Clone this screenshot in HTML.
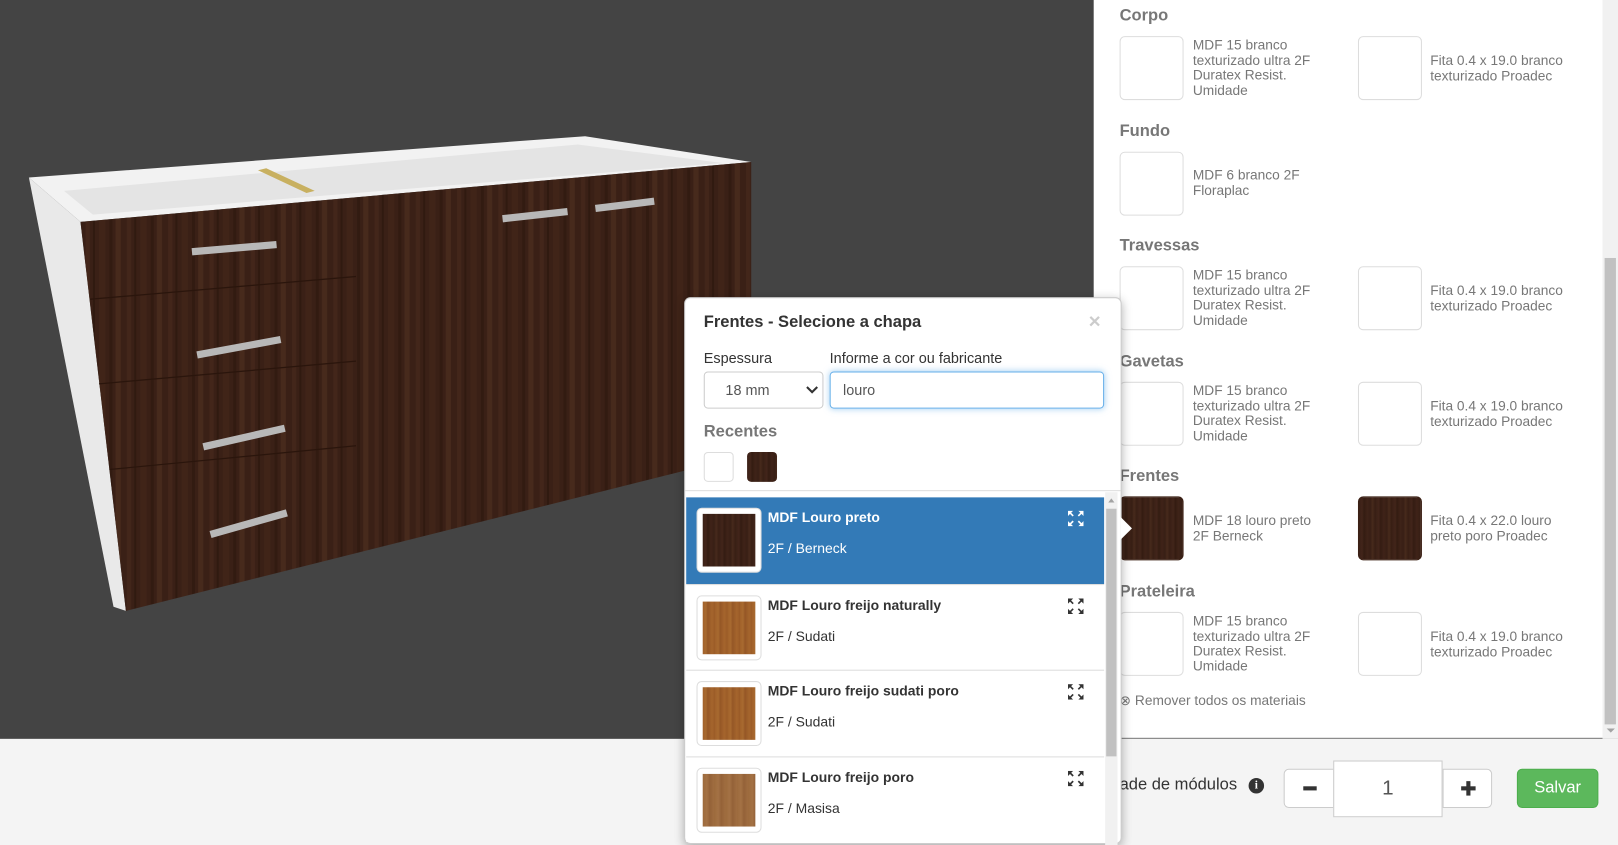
<!DOCTYPE html>
<html><head><meta charset="utf-8">
<style>
*{box-sizing:border-box;margin:0;padding:0}
html,body{width:1618px;height:824px;overflow:hidden;background:#f4f4f4;font-family:"Liberation Sans",Arial,sans-serif}
#s{position:absolute;left:0;top:0;width:1568px;height:798px;transform:scale(1.03189);transform-origin:0 0;background:#f4f4f4}
.abs{position:absolute}
#canvas{left:0;top:0;width:1060px;height:716px;background:#444}
#panel{left:1060px;top:0;width:508px;height:716px;background:#fff;border-bottom:1px solid #777}
#sb{left:1553px;top:0;width:15px;height:716px;background:#f1f1f1}
.h{position:absolute;left:25px;font-weight:bold;font-size:16px;color:#777}
.sw{position:absolute;width:62px;height:62px;border:1px solid #ddd;border-radius:5px;background:#fff}
.tx{position:absolute;font-size:13.3px;line-height:14.6px;color:#777;width:132px}
.tx.r{width:150px}
.wood{background:repeating-linear-gradient(90deg,#3a2016 0,#42251a 3px,#341c12 5px,#3f2318 8px,#381f15 11px,#472a1c 13px,#361d13 16px)}
.freijo{background:repeating-linear-gradient(90deg,#a1612a 0,#a86a30 3px,#955726 5px,#a5652d 9px,#9a5b27 12px)}
.masisa{background:repeating-linear-gradient(90deg,#9c6a3c 0,#a47245 4px,#946238 7px,#a06d40 11px)}
#modal{left:663px;top:288px;width:424px;height:530px;background:#fff;border:1px solid #ccc;border-radius:6px;box-shadow:0 3px 10px rgba(0,0,0,.3)}
.item{position:absolute;left:1px;width:405px;height:83px;border-top:1px solid #ddd;background:#fff}
.item .tb{position:absolute;left:10px;top:10px;width:63px;height:63px;border:1px solid #ddd;border-radius:5px;background:#fff;padding:5px}
.item .tb div{width:100%;height:100%}
.item .t1{position:absolute;left:79px;top:12px;font-weight:bold;font-size:13.5px;color:#333}
.item .t2{position:absolute;left:79px;top:42px;font-size:13.5px;color:#333}
.item svg{position:absolute;left:370px;top:13px}
.btn{position:absolute;top:745px;height:38px;background:#fff;border:1px solid #ccc}
</style></head><body>
<div id="s">
<div id="canvas" class="abs">
<svg width="1060" height="716" style="position:absolute;left:0;top:0">
<defs>
<pattern id="wp" width="40" height="300" patternUnits="userSpaceOnUse">
<rect width="40" height="300" fill="#3a2016"/>
<rect x="3" width="4" height="300" fill="#43261a"/>
<rect x="10" width="2" height="300" fill="#301a10"/>
<rect x="16" width="6" height="300" fill="#402418"/>
<rect x="26" width="3" height="300" fill="#321b11"/>
<rect x="32" width="5" height="300" fill="#472a1c"/>
</pattern>
</defs>
<polygon points="28,172 78,215 122,592 110,588" fill="#e9e9e9"/>
<polygon points="28,172 567,132 728,157 78,215" fill="#f2f2f2"/>
<polygon points="62,185 560,140 700,158 90,208" fill="#e4e4e4"/>
<polygon points="250,165 258,163 305,185 297,187" fill="#c8b060"/>
<polygon points="78,215 728,157 728,440 122,592" fill="url(#wp)"/>
<g stroke="#2a150c" stroke-width="1.2">
<line x1="87" y1="290" x2="345" y2="268"/>
<line x1="96" y1="372" x2="345" y2="350"/>
<line x1="106" y1="455" x2="345" y2="432"/>
</g>
<g stroke="#b8b8b8" stroke-width="7" stroke-linecap="butt">
<line x1="186" y1="244" x2="268" y2="237"/>
<line x1="191" y1="344" x2="272" y2="329"/>
<line x1="197" y1="433" x2="276" y2="415"/>
<line x1="204" y1="518" x2="278" y2="497"/>
<line x1="487" y1="212" x2="550" y2="205"/>
<line x1="577" y1="202" x2="634" y2="195"/>
</g>
</svg>
</div>
<div id="panel" class="abs">
<div class="h" style="top:7px">Corpo</div>
<div class="sw" style="left:25px;top:35px"></div><div class="tx" style="left:96px;top:37px">MDF 15 branco texturizado ultra 2F Duratex Resist. Umidade</div>
<div class="sw" style="left:256px;top:35px"></div><div class="tx r" style="left:326px;top:52px">Fita 0.4 x 19.0 branco texturizado Proadec</div>
<div class="h" style="top:119px">Fundo</div>
<div class="sw" style="left:25px;top:147px"></div><div class="tx" style="left:96px;top:163px">MDF 6 branco 2F Floraplac</div>
<div class="h" style="top:230px">Travessas</div>
<div class="sw" style="left:25px;top:258px"></div><div class="tx" style="left:96px;top:260px">MDF 15 branco texturizado ultra 2F Duratex Resist. Umidade</div>
<div class="sw" style="left:256px;top:258px"></div><div class="tx r" style="left:326px;top:275px">Fita 0.4 x 19.0 branco texturizado Proadec</div>
<div class="h" style="top:342px">Gavetas</div>
<div class="sw" style="left:25px;top:370px"></div><div class="tx" style="left:96px;top:372px">MDF 15 branco texturizado ultra 2F Duratex Resist. Umidade</div>
<div class="sw" style="left:256px;top:370px"></div><div class="tx r" style="left:326px;top:387px">Fita 0.4 x 19.0 branco texturizado Proadec</div>
<div class="h" style="top:453px">Frentes</div>
<div class="sw wood" style="left:25px;top:481px;border-color:#3b2015"></div><div class="tx" style="left:96px;top:498px">MDF 18 louro preto 2F Berneck</div>
<div class="sw wood" style="left:256px;top:481px;border-color:#3b2015"></div><div class="tx r" style="left:326px;top:498px">Fita 0.4 x 22.0 louro preto poro Proadec</div>
<div class="h" style="top:565px">Prateleira</div>
<div class="sw" style="left:25px;top:593px"></div><div class="tx" style="left:96px;top:595px">MDF 15 branco texturizado ultra 2F Duratex Resist. Umidade</div>
<div class="sw" style="left:256px;top:593px"></div><div class="tx r" style="left:326px;top:610px">Fita 0.4 x 19.0 branco texturizado Proadec</div>
<div class="abs" style="left:25px;top:671px;font-size:13.3px;color:#777">&#8855; Remover todos os materiais</div>
</div>
<div id="sb" class="abs"><div class="abs" style="left:2px;top:250px;width:11px;height:452px;background:#c1c1c1"></div><div class="abs" style="left:4px;top:706px;width:0;height:0;border-left:4px solid transparent;border-right:4px solid transparent;border-top:4px solid #a3a3a3"></div></div>

<div class="abs" style="left:1085px;top:752px;font-size:16px;color:#333">ade de módulos</div>
<div class="abs" style="left:1210px;top:754px;width:15px;height:15px;border-radius:50%;background:#333;color:#fff;font-size:11px;font-weight:bold;text-align:center;line-height:15px;font-family:'Liberation Serif',serif">i</div>
<div class="btn" style="left:1244px;width:49px;border-radius:5px 0 0 5px"><div class="abs" style="left:18px;top:16px;width:13px;height:4px;background:#333"></div></div>
<div class="btn" style="left:1398px;width:48px;border-radius:0 5px 5px 0"><div class="abs" style="left:17px;top:16px;width:14px;height:4px;background:#333"></div><div class="abs" style="left:22px;top:11px;width:4px;height:14px;background:#333"></div></div>
<div class="abs" style="left:1292px;top:737px;width:106px;height:55px;background:#fff;border:1px solid #ccc;text-align:center;line-height:53px;font-size:20px;color:#555">1</div>
<div class="abs" style="left:1470px;top:745px;width:79px;height:38px;background:#5cb85c;border:1px solid #4cae4c;border-radius:5px;color:#fff;font-size:16px;text-align:center;line-height:36px">Salvar</div>

<div id="modal" class="abs">
<div class="abs" style="left:18px;top:15px;font-weight:bold;font-size:16px;color:#333">Frentes - Selecione a chapa</div>
<div class="abs" style="left:391px;top:12px;font-size:20px;font-weight:bold;color:#ccc">×</div>
<div class="abs" style="left:18px;top:50px;font-size:14px;color:#333">Espessura</div>
<div class="abs" style="left:140px;top:50px;font-size:14px;color:#333">Informe a cor ou fabricante</div>
<div class="abs" style="left:18px;top:71px;width:116px;height:36px;border:1px solid #ccc;border-radius:4px;font-size:14px;color:#555;line-height:34px;padding-left:20px">18 mm
<svg class="abs" style="left:98px;top:13px" width="12" height="8"><path d="M1 1 L6 6 L11 1" stroke="#333" stroke-width="2" fill="none"/></svg></div>
<div class="abs" style="left:140px;top:71px;width:266px;height:36px;border:1px solid #66afe9;border-radius:4px;box-shadow:0 0 6px rgba(102,175,233,.6);font-size:14px;color:#555;line-height:34px;padding-left:12px">louro</div>
<div class="abs" style="left:18px;top:121px;font-weight:bold;font-size:16px;color:#777">Recentes</div>
<div class="abs" style="left:18px;top:149px;width:29px;height:29px;border:1px solid #ddd;border-radius:4px"></div>
<div class="abs wood" style="left:60px;top:149px;width:29px;height:29px;border-radius:4px"></div>
<div class="abs" style="left:0;top:186px;width:422px;height:1px;background:#ddd"></div>
<div class="abs" style="left:407px;top:188px;width:12px;height:342px;background:#f1f1f1"><div class="abs" style="left:3px;top:6px;border-left:3px solid transparent;border-right:3px solid transparent;border-bottom:4px solid #a3a3a3"></div><div class="abs" style="left:1px;top:16px;width:10px;height:240px;background:#c1c1c1"></div></div>
<div class="item" style="top:193px;background:#337ab7;border-top:none;height:84px">
<div class="tb"><div class="wood"></div></div>
<div class="t1" style="color:#fff">MDF Louro preto</div><div class="t2" style="color:#fff">2F / Berneck</div>
<svg width="15" height="15" viewBox="0 0 15 15" fill="#fff" stroke="#fff" stroke-width="1.6"><polygon points="0,0 5,0 0,5" stroke="none"/><line x1="1.5" y1="1.5" x2="5" y2="5"/><polygon points="15,0 10,0 15,5" stroke="none"/><line x1="13.5" y1="1.5" x2="10" y2="5"/><polygon points="0,15 5,15 0,10" stroke="none"/><line x1="1.5" y1="13.5" x2="5" y2="10"/><polygon points="15,15 10,15 15,10" stroke="none"/><line x1="13.5" y1="13.5" x2="10" y2="10"/></svg>
</div>
<div class="item" style="top:277px">
<div class="tb"><div class="freijo"></div></div>
<div class="t1">MDF Louro freijo naturally</div><div class="t2">2F / Sudati</div>
<svg width="15" height="15" viewBox="0 0 15 15" fill="#333" stroke="#333" stroke-width="1.6"><polygon points="0,0 5,0 0,5" stroke="none"/><line x1="1.5" y1="1.5" x2="5" y2="5"/><polygon points="15,0 10,0 15,5" stroke="none"/><line x1="13.5" y1="1.5" x2="10" y2="5"/><polygon points="0,15 5,15 0,10" stroke="none"/><line x1="1.5" y1="13.5" x2="5" y2="10"/><polygon points="15,15 10,15 15,10" stroke="none"/><line x1="13.5" y1="13.5" x2="10" y2="10"/></svg>
</div>
<div class="item" style="top:360px">
<div class="tb"><div class="freijo"></div></div>
<div class="t1">MDF Louro freijo sudati poro</div><div class="t2">2F / Sudati</div>
<svg width="15" height="15" viewBox="0 0 15 15" fill="#333" stroke="#333" stroke-width="1.6"><polygon points="0,0 5,0 0,5" stroke="none"/><line x1="1.5" y1="1.5" x2="5" y2="5"/><polygon points="15,0 10,0 15,5" stroke="none"/><line x1="13.5" y1="1.5" x2="10" y2="5"/><polygon points="0,15 5,15 0,10" stroke="none"/><line x1="1.5" y1="13.5" x2="5" y2="10"/><polygon points="15,15 10,15 15,10" stroke="none"/><line x1="13.5" y1="13.5" x2="10" y2="10"/></svg>
</div>
<div class="item" style="top:444px">
<div class="tb"><div class="masisa"></div></div>
<div class="t1">MDF Louro freijo poro</div><div class="t2">2F / Masisa</div>
<svg width="15" height="15" viewBox="0 0 15 15" fill="#333" stroke="#333" stroke-width="1.6"><polygon points="0,0 5,0 0,5" stroke="none"/><line x1="1.5" y1="1.5" x2="5" y2="5"/><polygon points="15,0 10,0 15,5" stroke="none"/><line x1="13.5" y1="1.5" x2="10" y2="5"/><polygon points="0,15 5,15 0,10" stroke="none"/><line x1="1.5" y1="13.5" x2="5" y2="10"/><polygon points="15,15 10,15 15,10" stroke="none"/><line x1="13.5" y1="13.5" x2="10" y2="10"/></svg>
</div>
</div>
<div class="abs" style="left:1086px;top:501px;width:0;height:0;border-top:11px solid transparent;border-bottom:11px solid transparent;border-left:11px solid #fff"></div>
</div>
</body></html>
